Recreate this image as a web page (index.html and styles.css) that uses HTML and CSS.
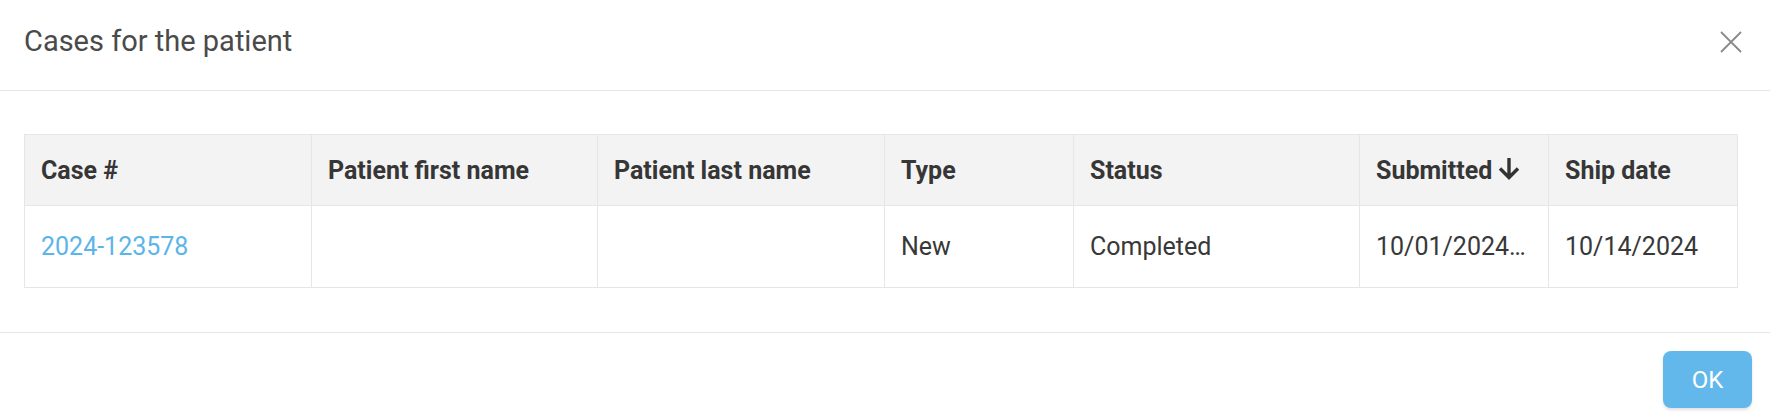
FILE: index.html
```html
<!DOCTYPE html>
<html lang="en">
<head>
<meta charset="utf-8">
<title>Cases for the patient</title>
<link rel="stylesheet" href="styles.css">
</head>
<body>
<div class="dialog">
  <header class="dialog-header">
    <h1 class="dialog-title">Cases for the patient</h1>
    <button class="close-btn" aria-label="Close">
      <svg width="22" height="22" viewBox="0 0 22 22"><path d="M1 1L21 21M21 1L1 21" stroke="#8a8a8a" stroke-width="1.8" fill="none"/></svg>
    </button>
  </header>
  <main class="dialog-body">
    <table class="cases">
      <thead>
        <tr>
          <th class="c-wide">Case #</th>
          <th class="c-mid">Patient first name</th>
          <th class="c-wide">Patient last name</th>
          <th class="c-narrow">Type</th>
          <th class="c-mid">Status</th>
          <th class="c-narrow">Submitted<svg class="sort-icon" width="22" height="23" viewBox="0 0 22 23"><path d="M11 1V20.5M2 11.5L11 20.5L20 11.5" stroke="#333" stroke-width="3.4" fill="none"/></svg></th>
          <th class="c-narrow">Ship date</th>
        </tr>
      </thead>
      <tbody>
        <tr>
          <td><a class="case-link" href="#">2024-123578</a></td>
          <td></td>
          <td></td>
          <td>New</td>
          <td>Completed</td>
          <td class="ellipsis">10/01/2024 10:32 AM</td>
          <td>10/14/2024</td>
        </tr>
      </tbody>
    </table>
  </main>
  <footer class="dialog-footer">
    <button class="ok-btn">OK</button>
  </footer>
</div>
</body>
</html>
```

FILE: styles.css
```css
html, body {
  margin: 0;
  padding: 0;
  background: #ffffff;
}

body {
  font-family: Roboto, "Noto Sans", "Liberation Sans", sans-serif;
  color: #333333;
  width: 1770px;
  height: 416px;
  overflow: hidden;
}

.dialog {
  display: flex;
  flex-direction: column;
}

.dialog-header {
  height: 90px;
  border-bottom: 1px solid #e6e6e6;
  display: flex;
  align-items: center;
  justify-content: space-between;
  padding: 0 28px 0 24px;
  box-sizing: content-box;
}

.dialog-title {
  margin: 0 0 8px 0;
  font-size: 29px;
  font-weight: 400;
  color: #4a4a4a;
}

.close-btn {
  border: 0;
  background: none;
  padding: 0;
  margin: 0 0 6px 0;
  width: 22px;
  height: 22px;
  display: flex;
}

.dialog-body {
  padding: 43px 32px 44px 24px;
}

.cases {
  table-layout: fixed;
  width: 1714px;
  border-collapse: separate;
  border-spacing: 0;
  border-top: 1px solid #e6e6e6;
  border-left: 1px solid #e6e6e6;
  font-size: 25px;
}

.cases th,
.cases td {
  box-sizing: border-box;
  border-right: 1px solid #e6e6e6;
  border-bottom: 1px solid #e6e6e6;
  padding: 0 16px;
  text-align: left;
  white-space: nowrap;
  overflow: hidden;
}

.cases th {
  height: 71px;
  background: #f3f3f3;
  font-weight: 700;
  color: #363636;
}

.cases td {
  height: 82px;
  color: #383838;
}

.c-wide { width: 287px; }
.c-mid { width: 286px; }
.c-narrow { width: 189px; }

.sort-icon {
  margin-left: 6px;
  vertical-align: -1px;
}

.cases td.ellipsis {
  text-overflow: ellipsis;
  padding-right: 22px;
}

.case-link {
  color: #5cb5e8;
  text-decoration: none;
}

.dialog-footer {
  border-top: 1px solid #e6e6e6;
  display: flex;
  justify-content: flex-end;
  padding: 18px 18px 0 0;
}

.ok-btn {
  width: 89px;
  height: 57px;
  border: 0;
  border-radius: 8px;
  background: #62b8ea;
  color: #ffffff;
  font-family: Roboto, "Noto Sans", "Liberation Sans", sans-serif;
  font-size: 24px;
  box-shadow: 0 2px 3px rgba(0, 0, 0, 0.12);
}
```
